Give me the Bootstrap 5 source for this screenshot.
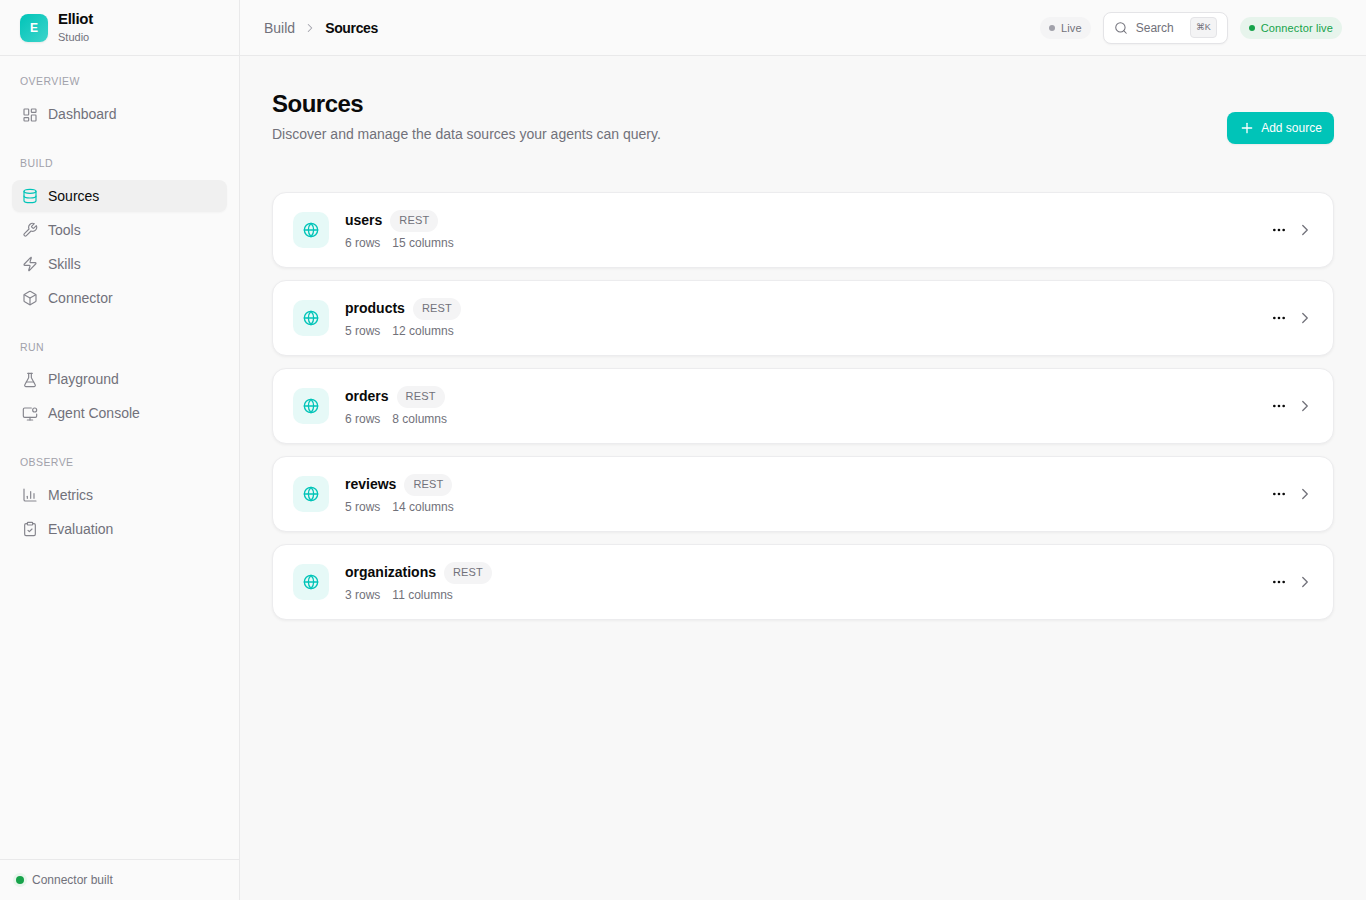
<!DOCTYPE html>
<html lang="en">
<head>
    <meta charset="UTF-8">
    <meta name="viewport" content="width=device-width, initial-scale=1.0">
    <title>Sources</title>
    <link href="https://cdn.jsdelivr.net/npm/bootstrap@5.3.0/dist/css/bootstrap.min.css" rel="stylesheet">
    <style>
        html, body { height: 100%; }
        body { font-family: "Liberation Sans", Arial, sans-serif; background: #f8f8f8; color: #0a0a0a; }
        .ic { width: 16px; height: 16px; fill: none; stroke: currentColor; stroke-width: 2; stroke-linecap: round; stroke-linejoin: round; flex-shrink: 0; }
        .app-shell { height: 100vh; overflow: hidden; }
        .side { width: 240px; background: #fafafa; border-right: 1px solid #e9e9ea; flex-shrink: 0; }
        .side-head { height: 56px; padding: 0 20px; gap: 10px; border-bottom: 1px solid #e9e9ea; }
        .logo-box { width: 28px; height: 28px; border-radius: 8px; background: linear-gradient(135deg, #00c4b8, #3dd4cb); color: #fff; font-size: 12px; font-weight: 700; box-shadow: 0 1px 2px rgba(0,0,0,.08); }
        .brand-name { font-size: 15px; font-weight: 700; line-height: 18px; letter-spacing: -.3px; margin-bottom: 1px; }
        .brand-sub { font-size: 11px; line-height: 16px; color: #71717a; }
        .side-nav { padding: 17.25px 12px 0; }
        .side-sec { margin-bottom: 24.42px; }
        .sec-label { font-size: 10.5px; line-height: 16px; letter-spacing: .42px; color: #a1a1aa; padding-left: 8px; margin-bottom: 9.25px; text-transform: uppercase; }
        .side-list { gap: 2px; }
        .side-item { height: 32px; padding: 0 10px; gap: 10px; font-size: 14px; color: #71717a; border-radius: 8px; text-decoration: none; }
        .side-item .ic { color: #85858d; stroke-width: 1.75; }
        .side-item.on { background: #f0f0f0; color: #0a0a0a; box-shadow: 0 1px 2px rgba(0,0,0,.03); }
        .side-item.on .ic { color: #00c4b8; }
        .side-foot { height: 41px; padding: 0 12px; gap: 8px; border-top: 1px solid #e9e9ea; font-size: 12px; color: #71717a; }
        .halo-dot { width: 8px; height: 8px; margin-left: 4px; border-radius: 50%; background: #16a34a; box-shadow: 0 0 0 3px #e8f5ec; flex-shrink: 0; }
        .top-bar { height: 56px; padding: 0 24px; background: #fafafa; border-bottom: 1px solid #e9e9ea; }
        .crumb-off { font-size: 14px; line-height: 20px; padding-top: 1px; color: #71717a; }
        .crumb-on { font-size: 14px; line-height: 20px; padding-top: 1px; font-weight: 700; letter-spacing: -.35px; }
        .crumb-sep { width: 14px; height: 14px; color: #a1a1aa; margin: 0 8px; stroke-width: 1.75; }
        .pill-tag { height: 22px; padding: 1px 9px 0; gap: 6px; font-size: 11px; letter-spacing: .14px; border-radius: 11px; }
        .pill-grey { background: #f4f4f5; color: #71717a; }
        .pill-green { background: #e7f4ec; color: #16a34a; }
        .pill-dot { width: 6px; height: 6px; border-radius: 50%; margin-top: -1px; }
        .dot-grey { background: #a1a1aa; }
        .dot-green { background: #16a34a; }
        .search-box { width: 125px; height: 32px; padding: 0 10px; gap: 8px; margin: 0 12px; background: #fff; border: 1px solid #e4e4e7; border-radius: 8px; font-size: 12px; color: #71717a; box-shadow: 0 1px 2px rgba(0,0,0,.04); }
        .search-box .ic { width: 14px; height: 14px; stroke-width: 1.75; }
        .kbd-key { margin-left: auto; width: 27px; height: 21px; font-size: 9px; background: #f4f4f5; border: 1px solid #e4e4e7; border-radius: 4px; }
        .page-body { padding: 32px; }
        .page-head { margin-bottom: 48px; height: 56px; }
        .page-title { font-size: 24px; line-height: 32px; font-weight: 700; letter-spacing: -.5px; margin: 0 0 4px; }
        .page-sub { font-size: 14px; line-height: 20px; color: #71717a; margin: 0; }
        .add-btn { height: 32px; width: 107px; margin-top: 24px; padding: 0; gap: 6px; background: #00c4b8; border: 0; border-radius: 8px; color: #fff; font-size: 12px; box-shadow: 0 1px 2px rgba(0,0,0,.06); }
        .add-btn:hover { background: #00b3a8; color: #fff; }
        .src-list { gap: 12px; }
        .src-card { height: 76px; padding: 0 19px 0 20px; background: #fff; border: 1px solid #ececee; border-radius: 14px; box-shadow: 0 1px 3px rgba(0,0,0,.05); }
        .src-icon { width: 36px; height: 36px; margin-right: 16px; border-radius: 10px; background: #e6f9f7; color: #00c4b8; }
        .src-name { font-size: 14px; font-weight: 700; line-height: 20px; padding-bottom: 2px; }
        .src-tag { height: 22px; margin-left: 8px; padding: 0 9px; font-size: 11px; letter-spacing: .15px; border-radius: 11px; background: #f4f4f5; color: #71717a; }
        .src-meta { font-size: 12px; line-height: 16px; color: #71717a; gap: 12px; margin-top: 3px; }
        .src-more { color: #0a0a0a; margin-right: 9px; }
        .src-go { color: #71717a; }
        .src-go .ic { width: 18px; height: 18px; stroke-width: 1.75; }
    </style>
</head>
<body>
    <svg width="0" height="0" class="d-none">
        <symbol id="i-dash" viewBox="0 0 24 24"><rect x="3" y="3" width="7" height="9" rx="1"/><rect x="14" y="3" width="7" height="5" rx="1"/><rect x="14" y="12" width="7" height="9" rx="1"/><rect x="3" y="16" width="7" height="5" rx="1"/></symbol>
        <symbol id="i-db" viewBox="0 0 24 24"><ellipse cx="12" cy="5" rx="9" ry="3"/><path d="M3 5V19A9 3 0 0 0 21 19V5"/><path d="M3 12A9 3 0 0 0 21 12"/></symbol>
        <symbol id="i-wrench" viewBox="0 0 24 24"><path d="M14.7 6.3a1 1 0 0 0 0 1.4l1.6 1.6a1 1 0 0 0 1.4 0l3.77-3.77a6 6 0 0 1-7.94 7.94l-6.91 6.91a2.12 2.12 0 0 1-3-3l6.91-6.91a6 6 0 0 1 7.94-7.94l-3.76 3.76z"/></symbol>
        <symbol id="i-zap" viewBox="0 0 24 24"><path d="M4 14a1 1 0 0 1-.78-1.63l9.9-10.2a.5.5 0 0 1 .86.46l-1.92 6.02A1 1 0 0 0 13 10h7a1 1 0 0 1 .78 1.63l-9.9 10.2a.5.5 0 0 1-.86-.46l1.92-6.02A1 1 0 0 0 11 14z"/></symbol>
        <symbol id="i-box" viewBox="0 0 24 24"><path d="M21 8a2 2 0 0 0-1-1.73l-7-4a2 2 0 0 0-2 0l-7 4A2 2 0 0 0 3 8v8a2 2 0 0 0 1 1.73l7 4a2 2 0 0 0 2 0l7-4A2 2 0 0 0 21 16Z"/><path d="m3.3 7 8.7 5 8.7-5"/><path d="M12 22V12"/></symbol>
        <symbol id="i-flask" viewBox="0 0 24 24"><path d="M14 2v6a2 2 0 0 0 .245.96l5.51 10.08A2 2 0 0 1 18 22H6a2 2 0 0 1-1.755-2.96l5.51-10.08A2 2 0 0 0 10 8V2"/><path d="M6.453 15h11.094"/><path d="M8.5 2h7"/></symbol>
        <symbol id="i-monitor" viewBox="0 0 24 24"><path d="M14 3H4a2 2 0 0 0-2 2v10a2 2 0 0 0 2 2h16a2 2 0 0 0 2-2v-3"/><path d="M12 17v4"/><path d="M8 21h8"/><circle cx="19" cy="6" r="3"/></symbol>
        <symbol id="i-chart" viewBox="0 0 24 24"><path d="M3 3v16a2 2 0 0 0 2 2h16"/><path d="M8 17v-3"/><path d="M13 17V7"/><path d="M18 17V10"/></symbol>
        <symbol id="i-clip" viewBox="0 0 24 24"><rect x="8" y="2" width="8" height="4" rx="1"/><path d="M16 4h2a2 2 0 0 1 2 2v14a2 2 0 0 1-2 2H6a2 2 0 0 1-2-2V6a2 2 0 0 1 2-2h2"/><path d="m9 14 2 2 4-4"/></symbol>
        <symbol id="i-globe" viewBox="0 0 24 24"><circle cx="12" cy="12" r="10"/><path d="M12 2a14.5 14.5 0 0 0 0 20 14.5 14.5 0 0 0 0-20"/><path d="M2 12h20"/></symbol>
        <symbol id="i-search" viewBox="0 0 24 24"><path d="m21 21-4.34-4.34"/><circle cx="11" cy="11" r="8"/></symbol>
        <symbol id="i-plus" viewBox="0 0 24 24"><path d="M5 12h14"/><path d="M12 5v14"/></symbol>
        <symbol id="i-right" viewBox="0 0 24 24"><path d="m9 18 6-6-6-6"/></symbol>
        <symbol id="i-more" viewBox="0 0 24 24"><circle cx="12" cy="12" r="1"/><circle cx="19" cy="12" r="1"/><circle cx="5" cy="12" r="1"/></symbol>
    </svg>

    <div class="app-shell d-flex">
        <!-- Sidebar -->
        <aside class="side d-flex flex-column">
            <div class="side-head d-flex align-items-center">
                <div class="logo-box d-flex align-items-center justify-content-center">E</div>
                <div>
                    <div class="brand-name">Elliot</div>
                    <div class="brand-sub">Studio</div>
                </div>
            </div>
            <nav class="side-nav flex-grow-1">
                <div class="side-sec">
                    <div class="sec-label">Overview</div>
                    <div class="side-list d-flex flex-column">
                        <a class="side-item d-flex align-items-center" href="#"><svg class="ic"><use href="#i-dash"/></svg>Dashboard</a>
                    </div>
                </div>
                <div class="side-sec">
                    <div class="sec-label">Build</div>
                    <div class="side-list d-flex flex-column">
                        <a class="side-item on d-flex align-items-center" href="#"><svg class="ic"><use href="#i-db"/></svg>Sources</a>
                        <a class="side-item d-flex align-items-center" href="#"><svg class="ic"><use href="#i-wrench"/></svg>Tools</a>
                        <a class="side-item d-flex align-items-center" href="#"><svg class="ic"><use href="#i-zap"/></svg>Skills</a>
                        <a class="side-item d-flex align-items-center" href="#"><svg class="ic"><use href="#i-box"/></svg>Connector</a>
                    </div>
                </div>
                <div class="side-sec">
                    <div class="sec-label">Run</div>
                    <div class="side-list d-flex flex-column">
                        <a class="side-item d-flex align-items-center" href="#"><svg class="ic"><use href="#i-flask"/></svg>Playground</a>
                        <a class="side-item d-flex align-items-center" href="#"><svg class="ic"><use href="#i-monitor"/></svg>Agent Console</a>
                    </div>
                </div>
                <div class="side-sec">
                    <div class="sec-label">Observe</div>
                    <div class="side-list d-flex flex-column">
                        <a class="side-item d-flex align-items-center" href="#"><svg class="ic"><use href="#i-chart"/></svg>Metrics</a>
                        <a class="side-item d-flex align-items-center" href="#"><svg class="ic"><use href="#i-clip"/></svg>Evaluation</a>
                    </div>
                </div>
            </nav>
            <div class="side-foot d-flex align-items-center">
                <span class="halo-dot"></span>
                <span>Connector built</span>
            </div>
        </aside>

        <div class="flex-grow-1 d-flex flex-column">
            <!-- Top bar -->
            <header class="top-bar d-flex align-items-center">
                <span class="crumb-off">Build</span>
                <svg class="ic crumb-sep"><use href="#i-right"/></svg>
                <span class="crumb-on">Sources</span>
                <div class="ms-auto d-flex align-items-center">
                    <span class="pill-tag pill-grey d-flex align-items-center"><span class="pill-dot dot-grey"></span>Live</span>
                    <div class="search-box d-flex align-items-center">
                        <svg class="ic"><use href="#i-search"/></svg>
                        <span>Search</span>
                        <span class="kbd-key d-flex align-items-center justify-content-center">⌘K</span>
                    </div>
                    <span class="pill-tag pill-green d-flex align-items-center"><span class="pill-dot dot-green"></span>Connector live</span>
                </div>
            </header>

            <!-- Page -->
            <main class="page-body flex-grow-1">
                <div class="page-head d-flex justify-content-between align-items-start">
                    <div>
                        <h1 class="page-title">Sources</h1>
                        <p class="page-sub">Discover and manage the data sources your agents can query.</p>
                    </div>
                    <button class="btn add-btn d-flex align-items-center justify-content-center"><svg class="ic"><use href="#i-plus"/></svg>Add source</button>
                </div>

                <div class="src-list d-flex flex-column">
                    <div class="src-card d-flex align-items-center">
                        <div class="src-icon d-flex align-items-center justify-content-center"><svg class="ic"><use href="#i-globe"/></svg></div>
                        <div class="flex-grow-1">
                            <div class="d-flex align-items-center"><span class="src-name">users</span><span class="src-tag d-flex align-items-center">REST</span></div>
                            <div class="src-meta d-flex"><span>6 rows</span><span>15 columns</span></div>
                        </div>
                        <div class="src-more d-flex"><svg class="ic"><use href="#i-more"/></svg></div>
                        <div class="src-go d-flex"><svg class="ic"><use href="#i-right"/></svg></div>
                    </div>
                    <div class="src-card d-flex align-items-center">
                        <div class="src-icon d-flex align-items-center justify-content-center"><svg class="ic"><use href="#i-globe"/></svg></div>
                        <div class="flex-grow-1">
                            <div class="d-flex align-items-center"><span class="src-name">products</span><span class="src-tag d-flex align-items-center">REST</span></div>
                            <div class="src-meta d-flex"><span>5 rows</span><span>12 columns</span></div>
                        </div>
                        <div class="src-more d-flex"><svg class="ic"><use href="#i-more"/></svg></div>
                        <div class="src-go d-flex"><svg class="ic"><use href="#i-right"/></svg></div>
                    </div>
                    <div class="src-card d-flex align-items-center">
                        <div class="src-icon d-flex align-items-center justify-content-center"><svg class="ic"><use href="#i-globe"/></svg></div>
                        <div class="flex-grow-1">
                            <div class="d-flex align-items-center"><span class="src-name">orders</span><span class="src-tag d-flex align-items-center">REST</span></div>
                            <div class="src-meta d-flex"><span>6 rows</span><span>8 columns</span></div>
                        </div>
                        <div class="src-more d-flex"><svg class="ic"><use href="#i-more"/></svg></div>
                        <div class="src-go d-flex"><svg class="ic"><use href="#i-right"/></svg></div>
                    </div>
                    <div class="src-card d-flex align-items-center">
                        <div class="src-icon d-flex align-items-center justify-content-center"><svg class="ic"><use href="#i-globe"/></svg></div>
                        <div class="flex-grow-1">
                            <div class="d-flex align-items-center"><span class="src-name">reviews</span><span class="src-tag d-flex align-items-center">REST</span></div>
                            <div class="src-meta d-flex"><span>5 rows</span><span>14 columns</span></div>
                        </div>
                        <div class="src-more d-flex"><svg class="ic"><use href="#i-more"/></svg></div>
                        <div class="src-go d-flex"><svg class="ic"><use href="#i-right"/></svg></div>
                    </div>
                    <div class="src-card d-flex align-items-center">
                        <div class="src-icon d-flex align-items-center justify-content-center"><svg class="ic"><use href="#i-globe"/></svg></div>
                        <div class="flex-grow-1">
                            <div class="d-flex align-items-center"><span class="src-name">organizations</span><span class="src-tag d-flex align-items-center">REST</span></div>
                            <div class="src-meta d-flex"><span>3 rows</span><span>11 columns</span></div>
                        </div>
                        <div class="src-more d-flex"><svg class="ic"><use href="#i-more"/></svg></div>
                        <div class="src-go d-flex"><svg class="ic"><use href="#i-right"/></svg></div>
                    </div>
                </div>
            </main>
        </div>
    </div>

    <script src="https://cdn.jsdelivr.net/npm/bootstrap@5.3.0/dist/js/bootstrap.bundle.min.js"></script>
</body>
</html>
